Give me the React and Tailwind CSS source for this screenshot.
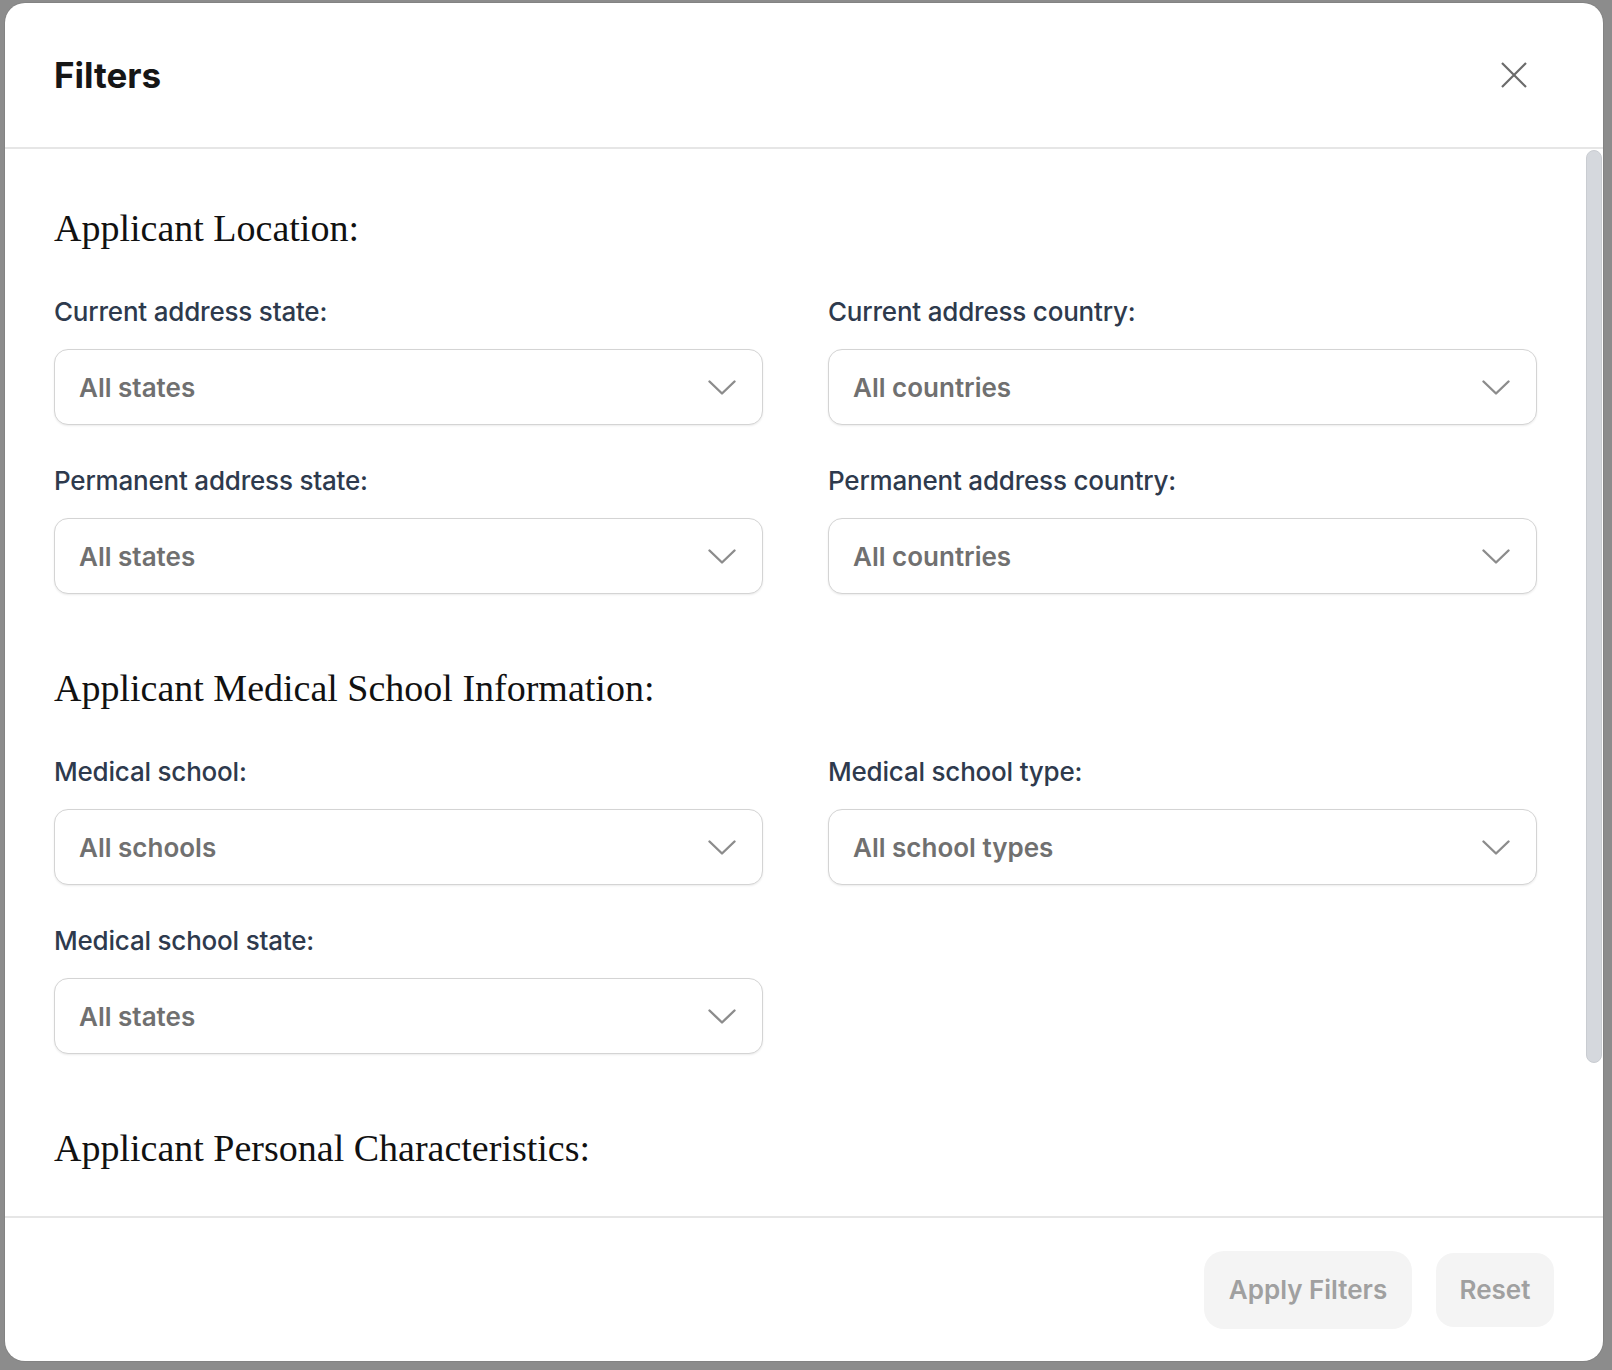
import React from "react";

const sections = [
  {
    title: "Applicant Location:",
    fields: [
      { label: "Current address state:", value: "All states" },
      { label: "Current address country:", value: "All countries" },
      { label: "Permanent address state:", value: "All states" },
      { label: "Permanent address country:", value: "All countries" },
    ],
  },
  {
    title: "Applicant Medical School Information:",
    fields: [
      { label: "Medical school:", value: "All schools" },
      { label: "Medical school type:", value: "All school types" },
      { label: "Medical school state:", value: "All states" },
    ],
  },
  {
    title: "Applicant Personal Characteristics:",
    fields: [],
  },
];

const Chevron = () => (
  <svg width="28" height="15" viewBox="0 0 28 15" fill="none">
    <polyline
      points="1.5,1.5 14,13.5 26.5,1.5"
      stroke="#8c8c8c"
      strokeWidth="2.4"
      strokeLinecap="round"
      strokeLinejoin="round"
    />
  </svg>
);

const SelectBox = ({ label, value }) => (
  <div className="flex flex-col gap-[22px]">
    <label className="text-[26px] leading-[30px] font-medium text-[#2e3a4d] tracking-[-0.2px]">
      {label}
    </label>
    <div className="h-[76px] flex items-center justify-between rounded-[14px] border-[1.5px] border-[#d4d4d4] bg-white pl-[24px] pr-[26px] shadow-[0_1px_2px_rgba(0,0,0,0.08)]">
      <span className="text-[26px] font-semibold text-[#707070]">{value}</span>
      <Chevron />
    </div>
  </div>
);

export default function App() {
  return (
    <div
      className="h-[1370px] w-[1612px] bg-[#8c8c8c] pt-[3px] pl-[5px] overflow-hidden"
      style={{ fontFamily: "Inter, 'Liberation Sans', sans-serif" }}
    >
      <div className="w-[1598px] h-[1358px] bg-white rounded-[20px] flex flex-col overflow-hidden shadow-[0_0_0_1px_rgba(0,0,0,0.06)]">
        {/* Header */}
        <div className="h-[146px] shrink-0 flex items-center justify-between pl-[49px] pr-[76px] border-b-2 border-[#e6e6e6]">
          <h1 className="text-[35px] font-bold text-[#161616]">Filters</h1>
          <button className="text-[#6b6b6b]">
            <svg width="26" height="26" viewBox="0 0 26 26" fill="none">
              <path d="M1 1 25 25M25 1 1 25" stroke="#6b6b6b" strokeWidth="2.2" />
            </svg>
          </button>
        </div>

        {/* Body */}
        <div className="flex-1 flex overflow-hidden">
          <div className="flex-1 pl-[49px] pr-[49px] pt-[59px] overflow-hidden">
            {sections.map((section, i) => (
              <div key={section.title} className={i > 0 ? "mt-[74px]" : ""}>
                <h2
                  className="text-[38px] leading-[40px] text-[#111]"
                  style={{ fontFamily: "'Liberation Serif', serif" }}
                >
                  {section.title}
                </h2>
                {section.fields.length > 0 && (
                  <div className="mt-[49px] grid grid-cols-2 gap-x-[65px] gap-y-[41px]">
                    {section.fields.map((f) => (
                      <SelectBox key={f.label} {...f} />
                    ))}
                  </div>
                )}
              </div>
            ))}
          </div>
          {/* scrollbar */}
          <div className="w-[17px] shrink-0 pt-[1px]">
            <div className="w-[16px] h-[913px] rounded-full bg-[#d5d8dd] border border-[#c9ccd1]" />
          </div>
        </div>

        {/* Footer */}
        <div className="h-[145px] shrink-0 border-t-2 border-[#e6e6e6] flex items-center justify-end gap-[24px] pr-[49px]">
          <button className="h-[78px] w-[208px] rounded-[20px] bg-[#f4f4f4] text-[26px] font-semibold text-[#a0a0a0]">
            Apply Filters
          </button>
          <button className="h-[74px] w-[118px] rounded-[18px] bg-[#f4f4f4] text-[26px] font-semibold text-[#a0a0a0]">
            Reset
          </button>
        </div>
      </div>
    </div>
  );
}
